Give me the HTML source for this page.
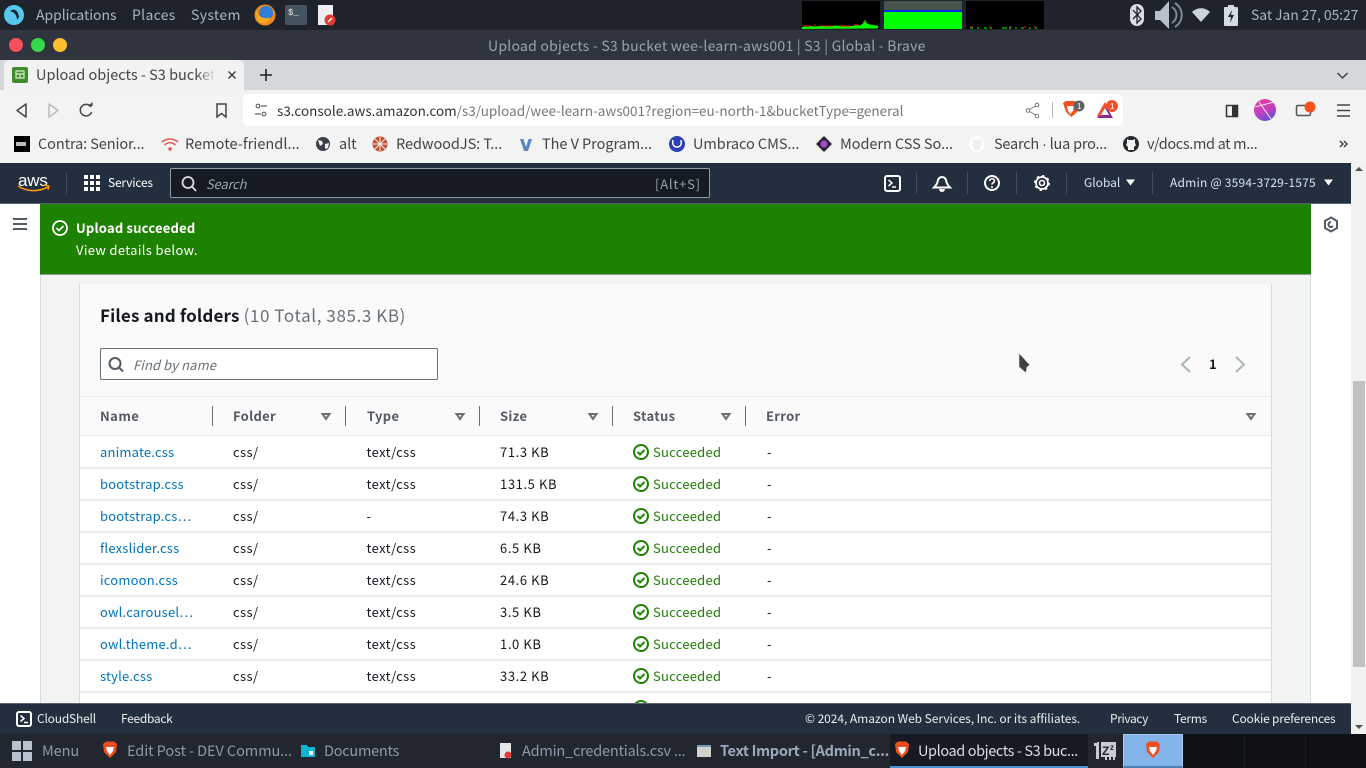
<!DOCTYPE html>
<html><head><meta charset="utf-8"><title>Upload objects - S3 bucket</title>
<style>
html,body{margin:0;padding:0;width:1366px;height:768px;overflow:hidden;background:#fff}
body{position:relative;font-family:"Noto Sans CJK SC","Liberation Sans",sans-serif}
.b{position:absolute}
.t{position:absolute;white-space:nowrap;line-height:20px;height:20px}
svg{position:absolute;overflow:visible}
.p{font-size:14px;color:#aab4c2;letter-spacing:.35px}
.bk{font-size:14.5px;color:#444;letter-spacing:-.05px}
.f{font-size:12px;color:#eaeded;letter-spacing:-.2px}
.tb{font-size:14.5px;color:#8e99ab;letter-spacing:.05px}
.h{font-size:13px;font-weight:700;color:#545b64;letter-spacing:.3px}
.c{font-size:13px;color:#16191f;letter-spacing:.4px}
.z{font-size:13px;color:#16191f;letter-spacing:.6px}
.l{font-size:13px;color:#0073bb;letter-spacing:.2px}
.s{font-size:13px;color:#1d8102;letter-spacing:.25px}
.sep{position:absolute;left:80px;width:1191px;height:2px;background:#eaeded}
.dv{position:absolute;width:1px;height:20px;top:406px;background:#687078}
.nd{position:absolute;width:1px;background:#414d5c}
</style></head><body>

<!-- desktop top panel -->
<div class="b" style="left:0;top:0;width:1366px;height:30px;background:#1f232b"></div>
<svg style="left:0;top:0" width="1366" height="30">
<circle cx="14" cy="15" r="10" fill="#55c8ee"/>
<path d="M10 11c4-3 8-1 9 6l-2 3c0-5-3-8-7-9z" fill="#1b2430"/>
<circle cx="265" cy="15" r="10.5" fill="#f08a1d"/>
<circle cx="266" cy="13" r="7" fill="#2f7fd6"/>
<path d="M256 9c2 8 8 11 14 8-1 5-5 7-9 6-4-2-6-8-5-14z" fill="#f5a623"/>
<rect x="285" y="5" width="22" height="20" rx="2" fill="#45555f"/>
<text x="288" y="15" font-size="9" fill="#e6e6e6" font-family="Liberation Mono">$_</text>
<rect x="318" y="5" width="15" height="20" fill="#eceff1"/>
<circle cx="330" cy="20" r="5.5" fill="#e53935"/>
<path d="M328 22l4-4" stroke="#fff" stroke-width="1.5"/>
</svg>
<div class="t p" style="left:36px;top:5px;letter-spacing:-.05px">Applications</div>
<div class="t p" style="left:132px;top:5px;letter-spacing:.3px">Places</div>
<div class="t p" style="left:191px;top:5px">System</div>

<div class="b" style="left:802px;top:1px;width:78px;height:28px;background:#000"></div>
<div class="b" style="left:884px;top:1px;width:78px;height:28px;background:#0f0"></div>
<div class="b" style="left:884px;top:1px;width:78px;height:9px;background:#46544c"></div>
<div class="b" style="left:884px;top:10px;width:78px;height:2px;background:#0a28e8"></div>
<div class="b" style="left:966px;top:1px;width:78px;height:28px;background:#000"></div>
<svg style="left:0;top:0" width="1366" height="30">
<path d="M802 29v-2l3-.5 3 .5 3-1 3 .5 6-.5 4 .5 2-1 5 .5 6-.5 4 .5 6-.5 5 .5 4-1 4 .5 3-2 2-4 2 4 3 1 5 1 3 0v3z" fill="#0f0"/>
<path d="M803 26h8m3-1h1v1m4 0h14m6 0h12m3-1h5m4-3h3" stroke="#e02020" stroke-width="1" fill="none"/>
<path d="M970 28h3m4 0h2m5 0h3m3 0h2m10 0h5m2 0h2m4 0h2m4 0h3m5 0h2m4 0h2" stroke="#0c0" stroke-width="1.2"/>
<path d="M970 27h3m16 0h2m18 0h3m12 0h2m8 0h2" stroke="#e02020" stroke-width="1"/>
<rect x="1130" y="4" width="14" height="22" rx="7" fill="#d7dde3"/>
<path d="M1133 10l8 9-4 4V7l4 4-8 8" stroke="#1f232b" stroke-width="1.3" fill="none"/>
<path d="M1155 11h5l9-10v28l-9-9h-5z" fill="#b6c1ca"/>
<path d="M1172 7c6 4 6 12 0 16M1175 3c9 6 9 18 0 24" stroke="#7e8a93" stroke-width="2" fill="none"/>
<path d="M1192 12c5-5 13-5 18 0l-9 10z" fill="#ccd3da"/>
<rect x="1224" y="7" width="14" height="19" rx="1" fill="#d5dce0"/>
<rect x="1228" y="5" width="6" height="2" fill="#d5dce0"/>
<path d="M1232 10l-4 7h3l-1 6 4-8h-3z" fill="#1f232b"/>
</svg>
<div class="t p" style="left:1251px;top:5px;letter-spacing:-.1px">Sat Jan 27, 05:27</div>

<!-- title bar -->
<div class="b" style="left:0;top:30px;width:1366px;height:30px;background:#2f343f"></div>
<svg style="left:0;top:30px" width="80" height="30">
<circle cx="16" cy="15" r="7" fill="#f4505c"/><circle cx="38" cy="15" r="7" fill="#35d94d"/><circle cx="60" cy="15" r="7" fill="#fdbd2e"/>
</svg>
<div class="t" style="left:488px;top:36px;font-size:14px;color:#98a4b4;letter-spacing:.24px">Upload objects - S3 bucket wee-learn-aws001 | S3 | Global - Brave</div>

<!-- tab strip -->
<div class="b" style="left:0;top:60px;width:1366px;height:30px;background:#d4d8db"></div>
<div class="b" style="left:4px;top:60px;width:240px;height:30px;background:#f2f2f2;border-radius:5px 5px 0 0"></div>
<div class="b" style="left:12px;top:67px;width:16px;height:16px;background:#3f8b2e;border-radius:2px"></div>
<svg style="left:0;top:60px" width="300" height="30">
<path d="M16 11h8v7h-8zM16 14h8M20 14v4" stroke="#d6f0c8" stroke-width="1.2" fill="none"/>
<path d="M228.5 11.5l7 7m0-7l-7 7" stroke="#444" stroke-width="1.5"/>
<path d="M266 9v12M260 15h12" stroke="#222" stroke-width="1.6"/>
</svg>
<div class="t" style="left:36px;top:65px;font-size:14.5px;color:#444;letter-spacing:0;width:178px;overflow:hidden">Upload objects - S3 bucket</div>
<div class="b" style="left:196px;top:62px;width:20px;height:26px;background:linear-gradient(90deg,rgba(242,242,242,0),#f2f2f2)"></div>
<svg style="left:1335px;top:70px" width="16" height="12"><path d="M2.5 3l5 5 5-5" stroke="#444" stroke-width="1.5" fill="none"/></svg>

<!-- toolbar -->
<div class="b" style="left:0;top:90px;width:1366px;height:73px;background:#f3f3f3"></div>
<div class="b" style="left:243px;top:94px;width:880px;height:32px;background:#fff;border-radius:6px"></div>
<svg style="left:0;top:90px" width="1366" height="40">
<path d="M26 14v13l-9-6.5z" fill="none" stroke="#444" stroke-width="1.5" stroke-linejoin="round"/>
<path d="M49 14v13l9-6.5z" fill="none" stroke="#bbb" stroke-width="1.5" stroke-linejoin="round"/>
<path d="M91 17a5.8 5.8 0 1 0 .6 5" fill="none" stroke="#444" stroke-width="1.5"/><path d="M88 16h4.5v-4z" fill="#444"/>
<path d="M217 14h9v13l-4.5-3.5-4.5 3.5z" fill="none" stroke="#444" stroke-width="1.5"/>
<g fill="none" stroke="#666" stroke-width="1.2"><circle cx="258" cy="16" r="1.8"/><path d="M261 16h6M255 24h6"/><circle cx="264" cy="24" r="1.8"/></g>
<g fill="none" stroke="#777" stroke-width="1"><circle cx="1037" cy="15" r="1.8"/><circle cx="1037" cy="26" r="1.8"/><circle cx="1028" cy="20.5" r="1.8"/><path d="M1035.5 16l-6 3.5m0 2l6 3.5"/></g>
<rect x="1052" y="12" width="1" height="16" fill="#bbb"/>
<path d="M1063 13l3-2h9l3 2-1 9-5.5 5-5.5-5z" fill="#f4511e"/><path d="M1067 16h7l-1 5-2.5 3-2.5-3z" fill="#fff"/>
<circle cx="1079" cy="16" r="5.5" fill="#5f6368"/><text x="1077" y="19" font-size="8" fill="#fff" font-family="Liberation Sans">1</text>
<path d="M1097 28l8-14 8 14z" fill="#8a2a8e"/><path d="M1097 26l8-14 2 3-6 11z" fill="#f04e30"/><path d="M1101 25h8l-4-7z" fill="#fff"/>
<circle cx="1112" cy="16" r="6" fill="#f4502a"/><text x="1110" y="19" font-size="8" fill="#fff" font-family="Liberation Sans">1</text>
<rect x="1226.5" y="15.5" width="11" height="11" fill="none" stroke="#333" stroke-width="1.5"/><rect x="1232" y="15" width="6" height="12" fill="#333"/>
<defs><linearGradient id="av" x1="0.3" y1="0" x2="0.7" y2="1"><stop offset="0" stop-color="#e8409a"/><stop offset=".55" stop-color="#c040c0"/><stop offset="1" stop-color="#5a50e0"/></linearGradient></defs>
<circle cx="1265" cy="20" r="11" fill="url(#av)"/><path d="M1255 17l19-5M1259 12l12 17" stroke="#fff" stroke-width=".8" fill="none"/>
<rect x="1296.5" y="15.5" width="14" height="10" rx="1.5" fill="none" stroke="#555" stroke-width="1.5"/>
<circle cx="1310" cy="17" r="5.5" fill="#f4511e"/>
<path d="M1337 15h13M1337 20.5h13M1337 26h13" stroke="#444" stroke-width="1.5"/>
</svg>
<div class="t" style="left:277px;top:100px;font-size:13.5px;letter-spacing:0;color:#777"><span style="color:#333">s3.console.aws.amazon.com</span>/s3/upload/wee-learn-aws001?region=eu-north-1&amp;bucketType=general</div>

<!-- bookmarks -->
<svg style="left:0;top:130px" width="1366" height="30">
<rect x="14" y="6" width="16" height="16" fill="#000"/><rect x="16" y="12" width="10" height="4" fill="#bbb"/>
<path d="M162 12c5-4 11-4 16 0M164.5 15c3.5-3 7.5-3 11 0" fill="none" stroke="#e0534a" stroke-width="1.5"/><circle cx="170" cy="19" r="1.7" fill="#e0534a"/>
<circle cx="323" cy="14" r="7" fill="#3b3f46"/><path d="M318 10l4 1 1 3-3 2zM325 14l4-1-1 5-3 1z" fill="#f3f3f3"/>
<circle cx="380" cy="14" r="7.5" fill="#c4502c"/><path d="M373 14h14M380 7v14M375 9l10 10M385 9l-10 10" stroke="#f3f3f3" stroke-width="1"/>
<path d="M520 9h3.5l2.5 8 2.5-8h3.5l-4 12h-4z" fill="#5d87bf"/>
<circle cx="677" cy="14" r="8" fill="#2c3fb5"/><path d="M673 10c-1 5 1 7 4 7s5-2 4-7" fill="none" stroke="#fff" stroke-width="1.5"/>
<path d="M824 6l8 8-8 8-8-8z" fill="#2b2233"/><circle cx="824" cy="14" r="3.5" fill="#a64fc9"/>
<circle cx="977" cy="14" r="8" fill="#fdfdfd"/><path d="M973 9l2 1h4l2-1v4l1 2-2 2v3h-6v-3l-2-2 1-2z" fill="#eee"/>
<circle cx="1131" cy="14" r="8" fill="#24292e"/><path d="M1127 9l2 1h4l2-1v4l1 2-2 2v3h-6v-3l-2-2 1-2z" fill="#f3f3f3"/>
<path d="M1340 11l3 3-3 3M1344 11l3 3-3 3" stroke="#444" stroke-width="1.5" fill="none"/>
</svg>
<div class="t bk" style="left:38px;top:134px;letter-spacing:-.1px">Contra: Senior...</div>
<div class="t bk" style="left:185px;top:134px;letter-spacing:.05px">Remote-friendl...</div>
<div class="t bk" style="left:339px;top:134px">alt</div>
<div class="t bk" style="left:396px;top:134px">RedwoodJS: T...</div>
<div class="t bk" style="left:542px;top:134px">The V Program...</div>
<div class="t bk" style="left:693px;top:134px">Umbraco CMS...</div>
<div class="t bk" style="left:840px;top:134px">Modern CSS So...</div>
<div class="t bk" style="left:994px;top:134px;letter-spacing:-.22px">Search <span style="font-family:'Liberation Sans'">·</span> lua pro...</div>
<div class="t bk" style="left:1147px;top:134px;letter-spacing:-.35px">v/docs.md at m...</div>

<!-- page background -->
<div class="b" style="left:0;top:163px;width:1351px;height:571px;background:#fff"></div>
<div class="b" style="left:40px;top:204px;width:1271px;height:500px;background:#f2f3f3;border-left:1px solid #d5dbdb;border-right:1px solid #d5dbdb;box-sizing:border-box"></div>
<!-- scrollbar -->
<div class="b" style="left:1351px;top:163px;width:15px;height:571px;background:#f1f1f1"></div>
<div class="b" style="left:1353px;top:381px;width:12px;height:286px;background:#c1c1c1"></div>
<svg style="left:1351px;top:163px" width="15" height="571"><path d="M4 8h8l-4-4z" fill="#505050"/><path d="M4 562h8l-4 4z" fill="#505050"/></svg>

<!-- card -->
<div class="b" style="left:79px;top:284px;width:1193px;height:420px;background:#fff;border-left:1px solid #d5dbdb;border-right:1px solid #d5dbdb;box-sizing:border-box"></div>
<div class="b" style="left:80px;top:284px;width:1191px;height:152px;background:#fafafa"></div>
<div class="t" style="left:100px;top:305px;font-size:17px;font-weight:700;color:#16191f;letter-spacing:.15px">Files and folders <span style="font-weight:400;color:#687078;letter-spacing:.6px">(10 Total, 385.3 KB)</span></div>
<div class="b" style="left:100px;top:348px;width:338px;height:32px;box-sizing:border-box;background:#fff;border:1px solid #687078;border-radius:2px"></div>
<svg style="left:100px;top:348px" width="34" height="32"><circle cx="15" cy="15.5" r="5.5" fill="none" stroke="#545b64" stroke-width="2"/><path d="M19 19.5l4 4" stroke="#545b64" stroke-width="2"/></svg>
<div class="t" style="left:133px;top:355px;font-size:13px;font-style:italic;color:#687078;letter-spacing:.1px">Find by name</div>
<svg style="left:1170px;top:350px" width="90" height="30"><path d="M20 7l-8 7.5 8 7.5M66 7l8 7.5-8 7.5" fill="none" stroke="#aab7b8" stroke-width="2"/></svg>
<div class="t" style="left:1209px;top:354px;font-size:13px;font-weight:700;color:#16191f">1</div>
<svg style="left:1018px;top:352px" width="14" height="24"><path d="M1 1L12 13 9 15 8 21 1 15z" fill="#404040" stroke="#eee" stroke-width=".6"/></svg>

<div class="b" style="left:80px;top:396px;width:1191px;height:1px;background:#eaeded"></div>
<div class="b" style="left:80px;top:435px;width:1191px;height:1px;background:#eaeded"></div>
<div class="t h" style="left:100px;top:406px;letter-spacing:.45px">Name</div>
<div class="t h" style="left:233px;top:406px">Folder</div>
<div class="t h" style="left:367px;top:406px">Type</div>
<div class="t h" style="left:500px;top:406px">Size</div>
<div class="t h" style="left:633px;top:406px">Status</div>
<div class="t h" style="left:766px;top:406px">Error</div>
<div class="dv" style="left:212px"></div><div class="dv" style="left:345px"></div><div class="dv" style="left:479px"></div><div class="dv" style="left:612px"></div><div class="dv" style="left:745px"></div>
<svg style="left:0;top:400px" width="1366" height="30">
<g fill="none" stroke="#687078" stroke-width="2"><path d="M322.5 14h7l-3.5 5zM456.5 14h7l-3.5 5zM589.5 14h7l-3.5 5zM722.5 14h7l-3.5 5zM1247.5 14h7l-3.5 5z"/></g>
</svg>

<!-- rows -->
<div class="t l" style="left:100px;top:442px">animate.css</div><div class="t c" style="left:233px;top:442px">css/</div><div class="t c" style="left:366.5px;top:442px">text/css</div><div class="t z" style="left:500px;top:442px">71.3 KB</div><div class="t s" style="left:653px;top:442px">Succeeded</div><div class="t c" style="left:767px;top:442px">-</div>
<div class="sep" style="top:467px"></div>
<div class="t l" style="left:100px;top:474px">bootstrap.css</div><div class="t c" style="left:233px;top:474px">css/</div><div class="t c" style="left:366.5px;top:474px">text/css</div><div class="t z" style="left:500px;top:474px">131.5 KB</div><div class="t s" style="left:653px;top:474px">Succeeded</div><div class="t c" style="left:767px;top:474px">-</div>
<div class="sep" style="top:499px"></div>
<div class="t l" style="left:100px;top:506px">bootstrap.cs…</div><div class="t c" style="left:233px;top:506px">css/</div><div class="t c" style="left:366.5px;top:506px">-</div><div class="t z" style="left:500px;top:506px">74.3 KB</div><div class="t s" style="left:653px;top:506px">Succeeded</div><div class="t c" style="left:767px;top:506px">-</div>
<div class="sep" style="top:531px"></div>
<div class="t l" style="left:100px;top:538px">flexslider.css</div><div class="t c" style="left:233px;top:538px">css/</div><div class="t c" style="left:366.5px;top:538px">text/css</div><div class="t z" style="left:500px;top:538px">6.5 KB</div><div class="t s" style="left:653px;top:538px">Succeeded</div><div class="t c" style="left:767px;top:538px">-</div>
<div class="sep" style="top:563px"></div>
<div class="t l" style="left:100px;top:570px">icomoon.css</div><div class="t c" style="left:233px;top:570px">css/</div><div class="t c" style="left:366.5px;top:570px">text/css</div><div class="t z" style="left:500px;top:570px">24.6 KB</div><div class="t s" style="left:653px;top:570px">Succeeded</div><div class="t c" style="left:767px;top:570px">-</div>
<div class="sep" style="top:595px"></div>
<div class="t l" style="left:100px;top:602px">owl.carousel…</div><div class="t c" style="left:233px;top:602px">css/</div><div class="t c" style="left:366.5px;top:602px">text/css</div><div class="t z" style="left:500px;top:602px">3.5 KB</div><div class="t s" style="left:653px;top:602px">Succeeded</div><div class="t c" style="left:767px;top:602px">-</div>
<div class="sep" style="top:627px"></div>
<div class="t l" style="left:100px;top:634px">owl.theme.d…</div><div class="t c" style="left:233px;top:634px">css/</div><div class="t c" style="left:366.5px;top:634px">text/css</div><div class="t z" style="left:500px;top:634px">1.0 KB</div><div class="t s" style="left:653px;top:634px">Succeeded</div><div class="t c" style="left:767px;top:634px">-</div>
<div class="sep" style="top:659px"></div>
<div class="t l" style="left:100px;top:666px">style.css</div><div class="t c" style="left:233px;top:666px">css/</div><div class="t c" style="left:366.5px;top:666px">text/css</div><div class="t z" style="left:500px;top:666px">33.2 KB</div><div class="t s" style="left:653px;top:666px">Succeeded</div><div class="t c" style="left:767px;top:666px">-</div>
<div class="sep" style="top:691px"></div>
<svg style="left:625px;top:440px" width="30" height="270">
<defs><g id="ok"><circle cx="16" cy="12" r="7" fill="none" stroke="#1d8102" stroke-width="2"/><path d="M12.5 12l2.5 2.5 4.5-4.5" fill="none" stroke="#1d8102" stroke-width="2"/></g></defs>
<use href="#ok"/><use href="#ok" y="32"/><use href="#ok" y="64"/><use href="#ok" y="96"/><use href="#ok" y="128"/><use href="#ok" y="160"/><use href="#ok" y="192"/><use href="#ok" y="224"/><use href="#ok" y="256"/>
</svg>

<!-- green flash -->
<div class="b" style="left:40px;top:204px;width:1271px;height:70px;background:#1d8102;border-bottom:1px solid #8a9a8a;box-sizing:content-box"></div>
<svg style="left:50px;top:218px" width="20" height="20"><circle cx="10" cy="10" r="7" fill="none" stroke="#fff" stroke-width="1.8"/><path d="M6.5 10l2.5 2.5 4.5-4.5" fill="none" stroke="#fff" stroke-width="1.8"/></svg>
<div class="t" style="left:76px;top:218px;font-size:13px;font-weight:700;color:#fff;letter-spacing:.2px">Upload succeeded</div>
<div class="t" style="left:76px;top:240px;font-size:13px;color:#fff;letter-spacing:.35px">View details below.</div>
<svg style="left:0;top:204px" width="40" height="40"><path d="M13 15h14M13 20h14M13 25h14" stroke="#545b64" stroke-width="2"/></svg>
<svg style="left:1320px;top:214px" width="22" height="22"><path d="M11 3.5l6 3.5v7l-6 3.5-6-3.5V7z" fill="none" stroke="#545b64" stroke-width="2"/><path d="M11 8a2.5 2.5 0 1 0 2 4" fill="none" stroke="#545b64" stroke-width="2"/></svg>

<!-- aws nav -->
<div class="b" style="left:0;top:163px;width:1351px;height:40px;background:#232f3e;box-shadow:0 1px 0 #59626e"></div>
<div class="t" style="left:18px;top:171px;font-size:17px;color:#fff;font-family:'Liberation Sans',sans-serif;line-height:20px;letter-spacing:-.2px">aws</div>
<svg style="left:0;top:163px" width="1351" height="40">
<path d="M18 23c9 6 20 6 30 1" fill="none" stroke="#f90" stroke-width="1.6"/><path d="M44 22l5 1-1 4" fill="none" stroke="#f90" stroke-width="1.3"/>
<g fill="#fff"><rect x="84" y="12" width="4" height="4"/><rect x="90" y="12" width="4" height="4"/><rect x="96" y="12" width="4" height="4"/><rect x="84" y="18" width="4" height="4"/><rect x="90" y="18" width="4" height="4"/><rect x="96" y="18" width="4" height="4"/><rect x="84" y="24" width="4" height="4"/><rect x="90" y="24" width="4" height="4"/><rect x="96" y="24" width="4" height="4"/></g>
<rect x="885" y="13" width="15" height="15" rx="2" fill="none" stroke="#fff" stroke-width="2"/><path d="M888.5 17l3.5 3-3.5 3M892 24h4" fill="none" stroke="#fff" stroke-width="1.5"/>
<path d="M942 14c3 0 4 2 4.5 5 .5 2 2 4 3.5 5.500h-16c1.500-1.500 3-3.500 3.500-5.500.5-3 1.500-5 4.500-5z" fill="none" stroke="#fff" stroke-width="2"/><path d="M939 26a3 3 0 0 0 6 0z" fill="#fff"/>
<circle cx="992" cy="20" r="7" fill="none" stroke="#fff" stroke-width="2"/><path d="M989.7 18c0-3 4.7-3 4.7 0 0 1.800-2.400 1.800-2.400 3.500" fill="none" stroke="#fff" stroke-width="1.6"/><circle cx="992" cy="24" r="1" fill="#fff"/>
<circle cx="1042" cy="20" r="2.5" fill="none" stroke="#fff" stroke-width="1.6"/><circle cx="1042" cy="20" r="6" fill="none" stroke="#fff" stroke-width="1.7"/><circle cx="1042" cy="20" r="7.3" fill="none" stroke="#fff" stroke-width="1.4" stroke-dasharray="2.5 3.2"/>
<path d="M1126 16.5h9l-4.5 6zM1324 16.5h9l-4.5 6z" fill="#fff"/>
</svg>
<div class="nd" style="left:66px;top:172px;height:22px"></div>
<div class="nd" style="left:916px;top:172px;height:22px"></div><div class="nd" style="left:967px;top:172px;height:22px"></div><div class="nd" style="left:1016px;top:172px;height:22px"></div><div class="nd" style="left:1066px;top:172px;height:22px"></div><div class="nd" style="left:1152px;top:172px;height:22px"></div>
<div class="t f" style="left:108px;top:173px;color:#fff">Services</div>
<div class="b" style="left:170px;top:168px;width:540px;height:30px;box-sizing:border-box;background:#161b23;border:1px solid #8d99a8;border-radius:2px"></div>
<svg style="left:170px;top:168px" width="36" height="30"><circle cx="18" cy="14.5" r="5.5" fill="none" stroke="#d5dbdb" stroke-width="1.8"/><path d="M22 18.5l4 4.5" stroke="#d5dbdb" stroke-width="1.8"/></svg>
<div class="t" style="left:206px;top:174px;font-size:13px;font-style:italic;color:#95a5a6;letter-spacing:-.2px">Search</div>
<div class="t" style="left:655px;top:174px;font-size:13px;color:#95a5a6;letter-spacing:.8px">[Alt+S]</div>
<div class="t f" style="left:1084px;top:173px;color:#d5e4f3;letter-spacing:0">Global</div>
<div class="t f" style="left:1170px;top:173px;color:#d5e4f3;letter-spacing:.2px">Admin @ 3594-3729-1575</div>

<!-- aws footer -->
<div class="b" style="left:0;top:704px;width:1351px;height:30px;background:#232f3e;box-shadow:0 -1px 0 #59626e"></div>
<svg style="left:16px;top:711px" width="16" height="16"><rect x="1" y="1" width="14" height="14" rx="2" fill="none" stroke="#fff" stroke-width="2"/><path d="M4.5 4.5l3.5 3-3.5 3M8 11.5h4" fill="none" stroke="#fff" stroke-width="1.5"/></svg>
<div class="t f" style="left:37px;top:709px">CloudShell</div>
<div class="t f" style="left:121px;top:709px;letter-spacing:-.3px">Feedback</div>
<div class="t f" style="left:805px;top:709px;letter-spacing:-.05px">© 2024, Amazon Web Services, Inc. or its affiliates.</div>
<div class="t f" style="left:1110px;top:709px;letter-spacing:-.4px">Privacy</div>
<div class="t f" style="left:1174px;top:709px;letter-spacing:-.3px">Terms</div>
<div class="t f" style="left:1232px;top:709px">Cookie preferences</div>

<!-- taskbar -->
<div class="b" style="left:0;top:734px;width:1366px;height:34px;background:#22262e"></div>
<div class="b" style="left:890px;top:734px;width:198px;height:34px;background:#171a22;box-sizing:border-box;border-bottom:2px solid #4a90d9"></div>
<div class="b" style="left:1183px;top:734px;width:183px;height:34px;background:#0f1114"></div>
<div class="b" style="left:1123px;top:734px;width:60px;height:34px;background:#84b3ea;box-sizing:border-box;border:1px solid #a8cbf2;border-bottom:2px solid #4a7fb5"></div>
<svg style="left:0;top:734px" width="1366" height="34">
<g fill="#b8c2cf"><rect x="12" y="7" width="9" height="9"/><rect x="23" y="7" width="9" height="9"/><rect x="12" y="18" width="9" height="9"/><rect x="23" y="18" width="9" height="9"/></g>
<defs><g id="br"><path d="M-7-6l3-2.5h8l3 2.5-1 8L0 8l-6-6z" fill="#ef4f1f"/><path d="M-4-3h8L3 1 0 5l-3-4z" fill="#fff"/></g></defs>
<use href="#br" x="110" y="16"/>
<path d="M301 11h6l1 2h7v10h-14z" fill="#0db4cf"/><rect x="309" y="17" width="4" height="4" fill="#fff"/>
<rect x="500" y="9" width="11" height="15" fill="#e4e7ea"/><circle cx="508" cy="21" r="3.5" fill="#e53935"/>
<rect x="697" y="11" width="14" height="12" fill="#d0d5d0"/><rect x="697" y="11" width="14" height="2" fill="#7d98bb"/>
<use href="#br" x="902" y="16"/>
<path d="M1094 9h3v-1h2v17h-3V12h-2z" fill="#c8cdd2"/>
<path d="M1101 8h15v15h-1v3h-2v-3h-2v3h-2v-3h-2v3h-2v-3h-4z" fill="#c8cdd2"/>
<text x="1102" y="21" font-size="12" font-weight="700" fill="#22262e" font-family="Liberation Sans">Z</text>
<text x="1110" y="16" font-size="8" font-weight="700" fill="#22262e" font-family="Liberation Sans">z</text>
<use href="#br" x="1153" y="16"/>
<rect x="1244" y="0" width="1" height="34" fill="#1a1d21"/><rect x="1305" y="0" width="1" height="34" fill="#1a1d21"/>
</svg>
<div class="t tb" style="left:42px;top:741px;letter-spacing:-.1px">Menu</div>
<div class="t tb" style="left:127px;top:741px;letter-spacing:-.08px">Edit Post - DEV Commu...</div>
<div class="t tb" style="left:324px;top:741px;letter-spacing:-.25px">Documents</div>
<div class="t tb" style="left:522px;top:741px;letter-spacing:-.2px">Admin_credentials.csv ...</div>
<div class="t tb" style="left:720px;top:741px;font-weight:700;color:#9ba9bd;letter-spacing:-.3px">Text Import - [Admin_c...</div>
<div class="t tb" style="left:918px;top:741px;color:#d7dee8;letter-spacing:-.4px">Upload objects - S3 buc...</div>
</body></html>
